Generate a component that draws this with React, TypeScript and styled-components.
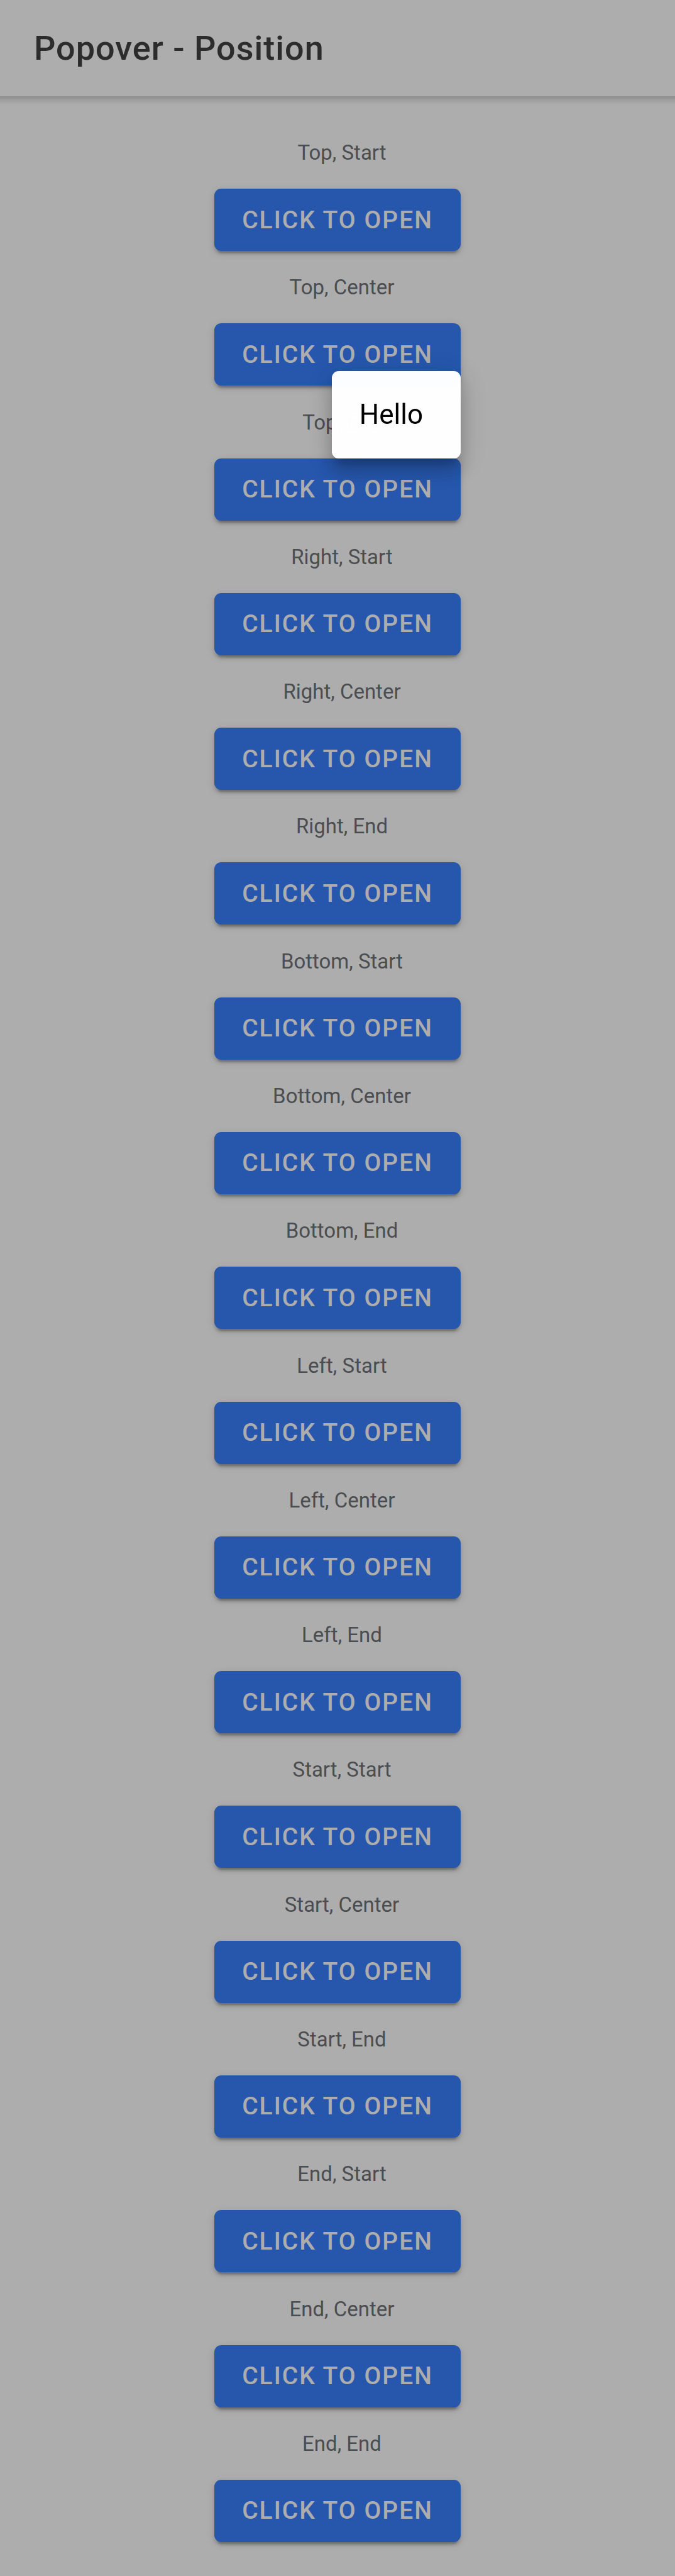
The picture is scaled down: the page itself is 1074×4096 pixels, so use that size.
import React, { useState } from "react";
import styled, { createGlobalStyle } from "styled-components";

const GlobalStyle = createGlobalStyle`
  *, *::before, *::after { box-sizing: border-box; }
  body {
    margin: 0;
    background: #fff;
    font-family: Roboto, "Liberation Sans", sans-serif;
  }
`;

const Page = styled.div`
  display: flex;
  flex-direction: column;
  min-height: 100vh;
`;

const Header = styled.header`
  position: relative;
  display: flex;
  align-items: center;
  height: 153px;
  padding: 0 54px;
  background: #fff;

  &::after {
    content: "";
    position: absolute;
    top: 100%;
    left: 0;
    right: 0;
    height: 13px;
    background: linear-gradient(rgba(0, 0, 0, 0.18), rgba(0, 0, 0, 0.08) 50%, rgba(0, 0, 0, 0));
  }
`;

const Title = styled.h1`
  margin: 0;
  color: #424242;
  font-size: 54px;
  font-weight: 500;
  line-height: 64px;
  letter-spacing: 1px;
`;

const Grid = styled.main`
  display: flex;
  flex: 1;
  flex-direction: column;
  align-items: center;
  justify-content: space-between;
  padding: 70px 44px 54px;
`;

const Item = styled.section`
  display: flex;
  flex-direction: column;
  align-items: center;
  gap: 37px;
`;

const Caption = styled.h2`
  margin: 0;
  padding-left: 14px;
  color: #6f7378;
  font-size: 33px;
  font-weight: 400;
  line-height: 40px;
`;

const Anchor = styled.div`
  position: relative;
`;

const Button = styled.button`
  display: block;
  height: 99px;
  padding: 0 44px;
  border: 0;
  border-radius: 11px;
  background: #3880ff;
  color: #fff;
  font: 500 39px/44px Roboto, "Liberation Sans", sans-serif;
  letter-spacing: 2px;
  text-transform: uppercase;
  cursor: pointer;
  box-shadow:
    0 8px 3px -5px rgba(0, 0, 0, 0.2),
    0 5px 5px 0 rgba(0, 0, 0, 0.14),
    0 3px 14px 0 rgba(0, 0, 0, 0.12);
`;

const Backdrop = styled.div`
  position: fixed;
  inset: 0;
  z-index: 1;
  background: rgba(0, 0, 0, 0.32);
`;

const Popover = styled.div`
  position: absolute;
  right: 0;
  bottom: 100%;
  z-index: 2;
  min-width: 205px;
  padding: 44px;
  border-radius: 11px;
  background: rgba(255, 255, 255, 0.99);
  color: #000;
  font-size: 44px;
  line-height: 51px;
  box-shadow:
    0 14px 14px -8px rgba(0, 0, 0, 0.2),
    0 22px 27px 3px rgba(0, 0, 0, 0.14),
    0 8px 38px 5px rgba(0, 0, 0, 0.12);
`;

const sides = ["Top", "Right", "Bottom", "Left", "Start", "End"];
const alignments = ["Start", "Center", "End"];
const positions = sides.flatMap((side) => alignments.map((alignment) => `${side}, ${alignment}`));

export default function App() {
  const [open, setOpen] = useState<string | null>("Top, End");

  return (
    <Page>
      <GlobalStyle />
      <Header>
        <Title>Popover - Position</Title>
      </Header>
      <Grid>
        {positions.map((position) => (
          <Item key={position}>
            <Caption>{position}</Caption>
            <Anchor>
              <Button type="button" onClick={() => setOpen(position)}>
                Click to Open
              </Button>
              {open === position && <Popover role="dialog" aria-label={position}>Hello</Popover>}
            </Anchor>
          </Item>
        ))}
      </Grid>
      {open && <Backdrop onClick={() => setOpen(null)} />}
    </Page>
  );
}
